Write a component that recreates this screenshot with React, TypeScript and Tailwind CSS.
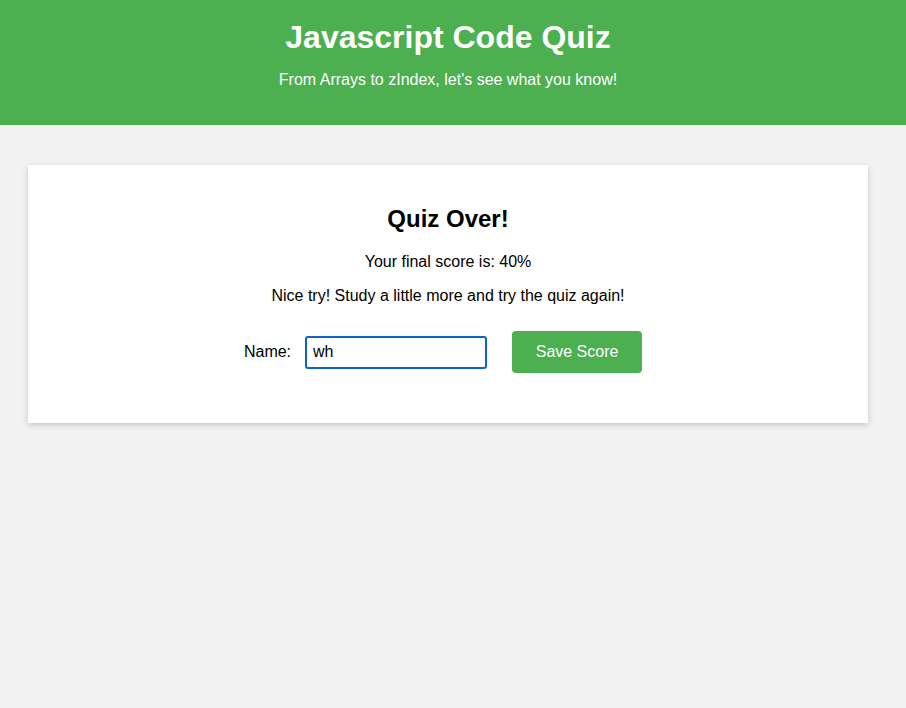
import React from "react";

export default function App() {
  return (
    <div className="min-h-[708px] bg-[#f2f2f2] font-['Liberation_Sans',Arial,sans-serif] text-black">
      <header className="h-[125px] bg-[#4caf50] pt-[19px] text-white">
        <div className="w-[896px] text-center">
          <h1 className="text-[32px] font-bold leading-[37px]">Javascript Code Quiz</h1>
          <p className="mt-[15px] text-base leading-[18px]">
            From Arrays to zIndex, let's see what you know!
          </p>
        </div>
      </header>

      <main className="w-[896px] pt-[40px]">
        <section className="mx-[28px] bg-white pt-[40px] pb-[50px] text-center shadow-[0_2px_6px_rgba(0,0,0,0.18)]">
          <h2 className="text-2xl font-bold leading-[28px]">Quiz Over!</h2>
          <p className="mt-[20px] text-base leading-[18px]">Your final score is: 40%</p>
          <p className="mt-[16px] text-base leading-[18px]">
            Nice try! Study a little more and try the quiz again!
          </p>
          <form className="mt-[26px] flex items-center justify-center pr-[10px]" onSubmit={(e) => e.preventDefault()}>
            <label htmlFor="name" className="text-base leading-[18px]">
              Name:
            </label>
            <input
              id="name"
              defaultValue="wh"
              className="ml-[14px] h-[33px] w-[182px] rounded-[3px] border-2 border-[#0b63ce] px-[6px] text-base outline-none"
            />
            <button
              type="submit"
              className="ml-[25px] h-[42px] w-[130px] rounded-[4px] bg-[#4caf50] text-base text-white"
            >
              Save Score
            </button>
          </form>
        </section>
      </main>
    </div>
  );
}
